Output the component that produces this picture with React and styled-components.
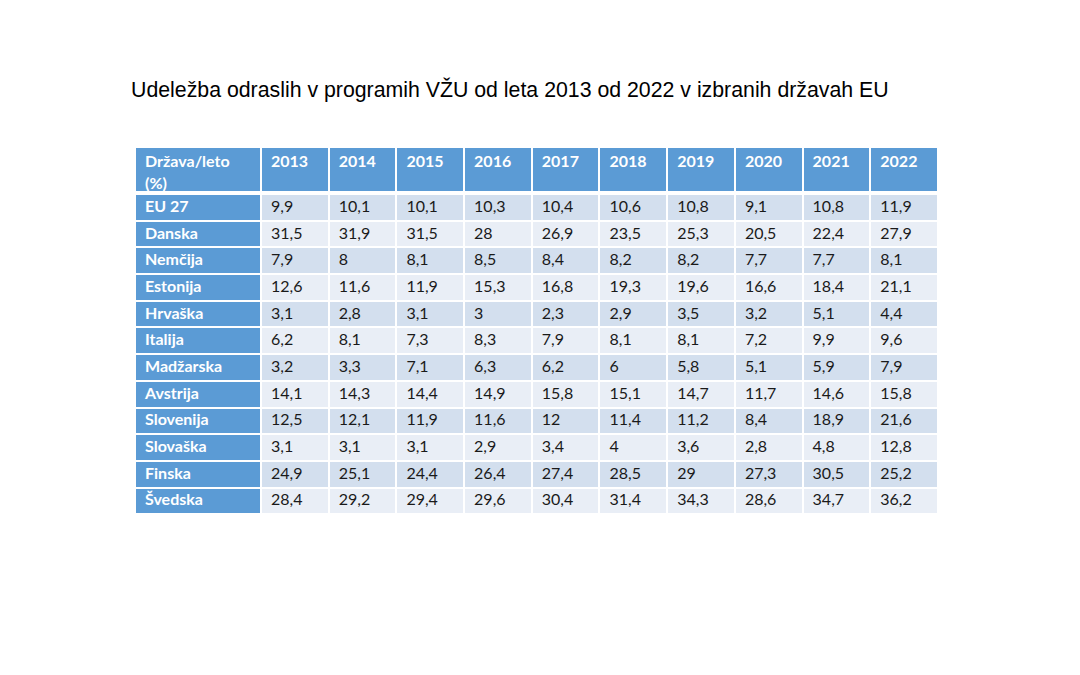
import React from "react";
import styled, { createGlobalStyle } from "styled-components";

const GlobalStyle = createGlobalStyle`
  html, body { margin: 0; padding: 0; background: #ffffff; }
  body { width: 1080px; height: 675px; overflow: hidden; }
`;

const Page = styled.div`
  width: 1080px;
  height: 675px;
  box-sizing: border-box;
  padding: 78px 0 0 131px;
  display: flex;
  flex-direction: column;
`;

const Title = styled.h1`
  margin: 0;
  font-family: "Liberation Sans", Arial, sans-serif;
  font-weight: 400;
  font-size: 21.3px;
  line-height: 24px;
  color: #000;
  white-space: nowrap;
`;

const Table = styled.div`
  margin: 46px 0 0 5px;
  width: 801px;
  display: grid;
  grid-template-columns: 124px repeat(10, 1fr);
  column-gap: 2px;
  row-gap: 2px;
  grid-template-rows: 45px repeat(12, 24.7px);
  font-family: Lato, "Open Sans", sans-serif;
  font-size: 16px;
`;

const HeadCell = styled.div`
  box-sizing: border-box;
  background: #5b9bd5;
  border-bottom: 2px solid #ffffff;
  color: #ffffff;
  font-weight: 700;
  padding: 2px 9px 0;
  line-height: 22px;
`;

const NameCell = styled.div`
  background: #5b9bd5;
  color: #ffffff;
  font-weight: 700;
  padding: 0 9px 3px;
  display: flex;
  align-items: center;
  line-height: 1;
`;

const DataCell = styled.div`
  background: ${(p) => (p.$alt ? "#e9eef6" : "#d3dfee")};
  color: #1a1a1a;
  padding: 0 9px 3px;
  display: flex;
  align-items: center;
  line-height: 1;
`;

const years = ["2013", "2014", "2015", "2016", "2017", "2018", "2019", "2020", "2021", "2022"];

const rows = [
  ["EU 27", "9,9", "10,1", "10,1", "10,3", "10,4", "10,6", "10,8", "9,1", "10,8", "11,9"],
  ["Danska", "31,5", "31,9", "31,5", "28", "26,9", "23,5", "25,3", "20,5", "22,4", "27,9"],
  ["Nemčija", "7,9", "8", "8,1", "8,5", "8,4", "8,2", "8,2", "7,7", "7,7", "8,1"],
  ["Estonija", "12,6", "11,6", "11,9", "15,3", "16,8", "19,3", "19,6", "16,6", "18,4", "21,1"],
  ["Hrvaška", "3,1", "2,8", "3,1", "3", "2,3", "2,9", "3,5", "3,2", "5,1", "4,4"],
  ["Italija", "6,2", "8,1", "7,3", "8,3", "7,9", "8,1", "8,1", "7,2", "9,9", "9,6"],
  ["Madžarska", "3,2", "3,3", "7,1", "6,3", "6,2", "6", "5,8", "5,1", "5,9", "7,9"],
  ["Avstrija", "14,1", "14,3", "14,4", "14,9", "15,8", "15,1", "14,7", "11,7", "14,6", "15,8"],
  ["Slovenija", "12,5", "12,1", "11,9", "11,6", "12", "11,4", "11,2", "8,4", "18,9", "21,6"],
  ["Slovaška", "3,1", "3,1", "3,1", "2,9", "3,4", "4", "3,6", "2,8", "4,8", "12,8"],
  ["Finska", "24,9", "25,1", "24,4", "26,4", "27,4", "28,5", "29", "27,3", "30,5", "25,2"],
  ["Švedska", "28,4", "29,2", "29,4", "29,6", "30,4", "31,4", "34,3", "28,6", "34,7", "36,2"],
];

export default function App() {
  return (
    <>
      <GlobalStyle />
      <Page>
        <Title>Udeležba odraslih v programih VŽU od leta 2013 od 2022 v izbranih državah EU</Title>
        <Table>
          <HeadCell>
            Država/leto
            <br />
            (%)
          </HeadCell>
          {years.map((y) => (
            <HeadCell key={y}>{y}</HeadCell>
          ))}
          {rows.map((r, i) => (
            <React.Fragment key={r[0]}>
              <NameCell>{r[0]}</NameCell>
              {r.slice(1).map((v, j) => (
                <DataCell key={j} $alt={i % 2 === 1}>
                  {v}
                </DataCell>
              ))}
            </React.Fragment>
          ))}
        </Table>
      </Page>
    </>
  );
}
